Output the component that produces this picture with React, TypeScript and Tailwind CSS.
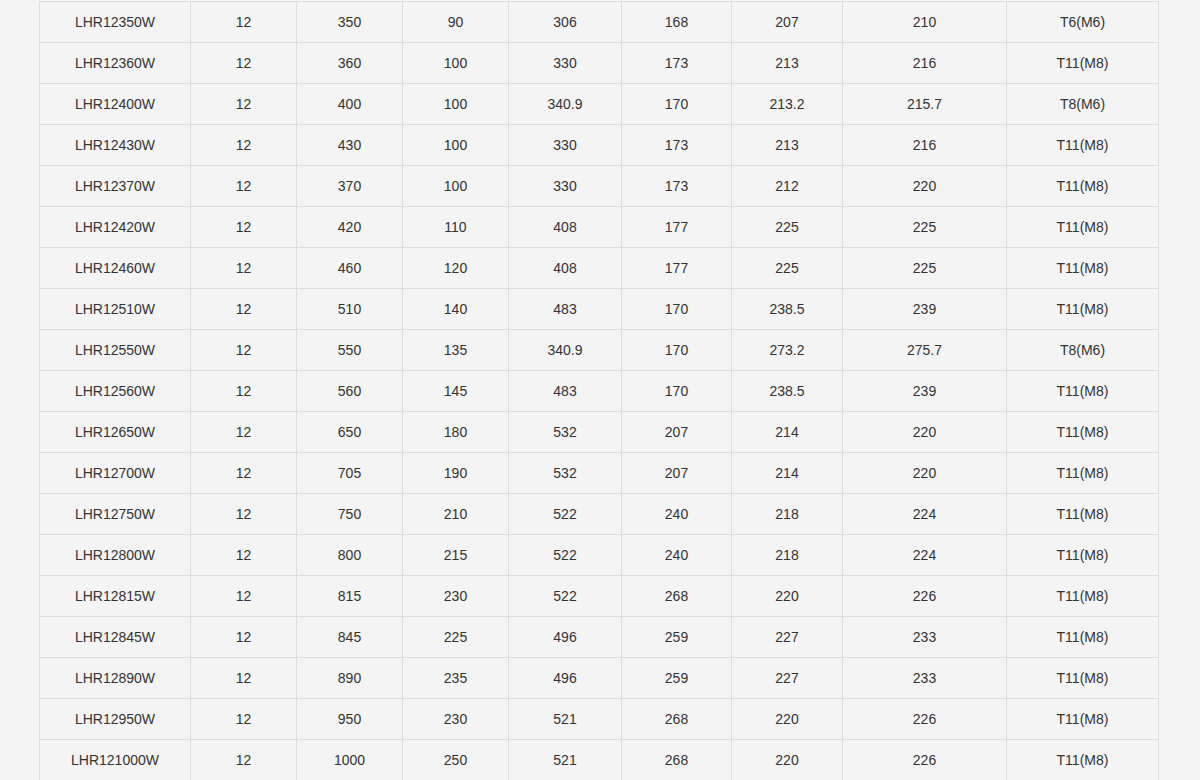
import React from "react";

const rows: string[][] = [
  ["LHR12350W", "12", "350", "90", "306", "168", "207", "210", "T6(M6)"],
  ["LHR12360W", "12", "360", "100", "330", "173", "213", "216", "T11(M8)"],
  ["LHR12400W", "12", "400", "100", "340.9", "170", "213.2", "215.7", "T8(M6)"],
  ["LHR12430W", "12", "430", "100", "330", "173", "213", "216", "T11(M8)"],
  ["LHR12370W", "12", "370", "100", "330", "173", "212", "220", "T11(M8)"],
  ["LHR12420W", "12", "420", "110", "408", "177", "225", "225", "T11(M8)"],
  ["LHR12460W", "12", "460", "120", "408", "177", "225", "225", "T11(M8)"],
  ["LHR12510W", "12", "510", "140", "483", "170", "238.5", "239", "T11(M8)"],
  ["LHR12550W", "12", "550", "135", "340.9", "170", "273.2", "275.7", "T8(M6)"],
  ["LHR12560W", "12", "560", "145", "483", "170", "238.5", "239", "T11(M8)"],
  ["LHR12650W", "12", "650", "180", "532", "207", "214", "220", "T11(M8)"],
  ["LHR12700W", "12", "705", "190", "532", "207", "214", "220", "T11(M8)"],
  ["LHR12750W", "12", "750", "210", "522", "240", "218", "224", "T11(M8)"],
  ["LHR12800W", "12", "800", "215", "522", "240", "218", "224", "T11(M8)"],
  ["LHR12815W", "12", "815", "230", "522", "268", "220", "226", "T11(M8)"],
  ["LHR12845W", "12", "845", "225", "496", "259", "227", "233", "T11(M8)"],
  ["LHR12890W", "12", "890", "235", "496", "259", "227", "233", "T11(M8)"],
  ["LHR12950W", "12", "950", "230", "521", "268", "220", "226", "T11(M8)"],
  ["LHR121000W", "12", "1000", "250", "521", "268", "220", "226", "T11(M8)"],
];

export default function App() {
  return (
    <div
      className="w-[1200px] h-[780px] overflow-hidden bg-[#f4f4f4]"
      style={{ fontFamily: '"Liberation Sans", Arial, sans-serif' }}
    >
      <div className="ml-[39px] mt-[1px] w-[1120px] border-l border-t border-[#dddddd] grid grid-cols-[151px_106px_106px_106px_113px_110px_111px_164px_152px]">
        {rows.map((r, i) =>
          r.map((c, j) => (
            <div
              key={i + "-" + j}
              className="h-[41px] border-r border-b border-[#dddddd] flex items-center justify-center text-[14px] text-[#333333]"
            >
              {c}
            </div>
          ))
        )}
      </div>
    </div>
  );
}
